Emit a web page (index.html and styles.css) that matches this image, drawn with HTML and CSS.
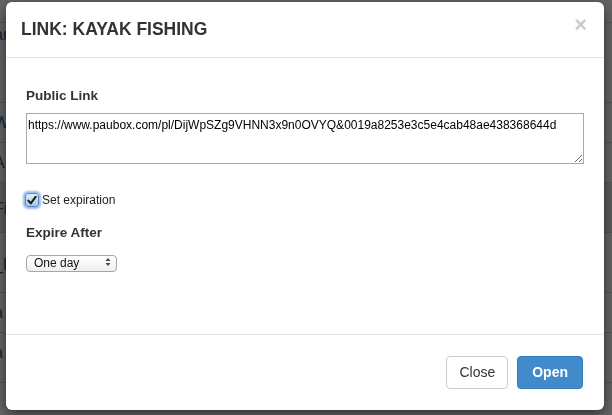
FILE: index.html
```html
<!DOCTYPE html>
<html lang="en">
<head>
    <meta charset="UTF-8">
    <meta name="viewport" content="width=device-width, initial-scale=1.0">
    <title>Link: Kayak Fishing</title>
    <link rel="stylesheet" href="styles.css">
</head>
<body>
    <!-- Page behind the modal -->
    <div id="file-list">
        <div class="row row-top"></div>
        <div class="row row-tall"><a href="#">ar</a></div>
        <div class="row"><a href="#">W</a></div>
        <div class="row"><a href="#">A</a></div>
        <div class="row row-active"><a href="#">Fi</a></div>
        <div class="row row-mid"><a href="#">_L</a></div>
        <div class="row"><a href="#">a</a></div>
        <div class="row row-mid2"><a href="#">a</a></div>
        <div class="row row-end"></div>
    </div>

    <div id="backdrop"></div>

    <div id="modal">
        <div class="modal-header">
            <h1 class="modal-title">LINK: KAYAK FISHING</h1>
            <button class="close" type="button">&times;</button>
        </div>
        <div class="modal-body">
            <label class="field-label" for="public-link">Public Link</label>
            <textarea id="public-link">https://www.paubox.com/pl/DijWpSZg9VHNN3x9n0OVYQ&amp;0019a8253e3c5e4cab48ae438368644d</textarea>

            <div class="check-row">
                <span class="check">
                    <svg viewBox="0 0 13 13" width="13" height="13">
                        <path d="M2.6 6.6 L5.2 9.6 L10.6 2.4" fill="none" stroke="#1b1b1b" stroke-width="2.2" stroke-linecap="round" stroke-linejoin="round"/>
                    </svg>
                </span>
                <span class="check-text">Set expiration</span>
            </div>

            <label class="field-label expire-label" for="expire">Expire After</label>
            <span class="select-wrap">
                <select id="expire">
                    <option>One day</option>
                    <option>One week</option>
                    <option>One month</option>
                </select>
                <svg class="select-arrows" viewBox="0 0 6 10" width="6" height="10">
                    <path d="M0.5 4 L3 1 L5.5 4 Z" fill="#444"/>
                    <path d="M0.5 6 L3 9 L5.5 6 Z" fill="#444"/>
                </svg>
            </span>
        </div>
        <div class="modal-footer">
            <button class="btn btn-default" type="button">Close</button>
            <button class="btn btn-primary" type="button">Open</button>
        </div>
    </div>
</body>
</html>
```

FILE: styles.css
```css
body {
    margin: 0;
    font-family: "Liberation Sans", Arial, sans-serif;
    background-color: #fff;
    color: #333;
    overflow: hidden;
}

#file-list {
    display: flex;
    flex-direction: column;
}

.row {
    height: 39px;
    border-bottom: 1px solid #d4d4d4;
    font-size: 16px;
    line-height: 40px;
}

.row a {
    display: inline-block;
    color: #2a6496;
    text-decoration: none;
    margin-left: -6px;
}

.row-top {
    height: 22px;
}

.row-tall {
    height: 79px;
    line-height: 24px;
}

.row-active {
    height: 49px;
    background-color: #ececec;
    line-height: 52px;
}

.row-mid {
    height: 59px;
    line-height: 64px;
}

.row-mid2 {
    height: 49px;
    line-height: 40px;
}

.row-end {
    border-bottom: none;
}

#backdrop {
    position: fixed;
    inset: 0;
    background: rgba(0, 0, 0, 0.6);
}

#modal {
    position: fixed;
    left: 6px;
    top: 2px;
    width: 598px;
    height: 408px;
    display: flex;
    flex-direction: column;
    background: #fff;
    border-radius: 6px;
    box-shadow: 0 4px 14px rgba(0, 0, 0, 0.55);
}

.modal-header {
    height: 55px;
    display: flex;
    align-items: center;
    justify-content: space-between;
    padding: 0 17px 0 15px;
    border-bottom: 1px solid #e5e5e5;
}

.modal-title {
    margin: 0;
    font-size: 17.5px;
    font-weight: bold;
    color: #333;
}

.close {
    border: none;
    background: none;
    padding: 0;
    margin-top: -10px;
    font-family: "Liberation Sans", Arial, sans-serif;
    font-size: 22px;
    font-weight: bold;
    line-height: 1;
    color: #000;
    opacity: 0.2;
}

.modal-body {
    flex: 1;
    display: flex;
    flex-direction: column;
    align-items: flex-start;
    padding: 30px 20px 0 20px;
}

.field-label {
    font-size: 13.5px;
    font-weight: bold;
    line-height: 16px;
    color: #333;
    margin-bottom: 9px;
}

textarea {
    box-sizing: border-box;
    width: 100%;
    height: 51px;
    margin: 0;
    padding: 4px 1px;
    border: 1px solid #a9a9a9;
    border-radius: 0;
    font-family: "Liberation Sans", Arial, sans-serif;
    font-size: 12px;
    line-height: 15px;
    color: #000;
}

.check-row {
    display: flex;
    align-items: center;
    gap: 3px;
    margin-top: 29px;
    margin-left: -1px;
    height: 14px;
}

.check {
    box-sizing: border-box;
    width: 14px;
    height: 14px;
    display: flex;
    align-items: center;
    justify-content: center;
    border: 1px solid #5a86c0;
    border-radius: 3px;
    background: linear-gradient(#e4eefa, #a9c6ec);
    box-shadow: 0 0 2px 2px rgba(96, 150, 222, 0.65);
}

.check-text {
    font-size: 12px;
    color: #222;
}

.expire-label {
    margin-top: 18px;
    margin-bottom: 12px;
}

.select-wrap {
    position: relative;
    display: inline-block;
}

select {
    appearance: none;
    box-sizing: border-box;
    width: 91px;
    height: 17px;
    margin: 0;
    padding: 0 0 0 7px;
    border: 1px solid #a6a6a6;
    border-radius: 4px;
    background: linear-gradient(#ffffff, #f0f0f0);
    font-family: "Liberation Sans", Arial, sans-serif;
    font-size: 12px;
    color: #111;
}

.select-arrows {
    position: absolute;
    right: 6px;
    top: 3.5px;
    pointer-events: none;
}

.modal-footer {
    height: 74px;
    display: flex;
    align-items: center;
    justify-content: flex-end;
    gap: 9px;
    padding: 0 21px 1px 0;
    border-top: 1px solid #e5e5e5;
}

.btn {
    height: 33px;
    border-radius: 4px;
    font-family: "Liberation Sans", Arial, sans-serif;
    font-size: 14px;
    cursor: pointer;
}

.btn-default {
    padding: 0 12px;
    background: #fff;
    border: 1px solid #ccc;
    color: #333;
}

.btn-primary {
    padding: 0 14px;
    background: #428bca;
    border: 1px solid #357ebd;
    color: #fff;
    font-weight: bold;
}
```
